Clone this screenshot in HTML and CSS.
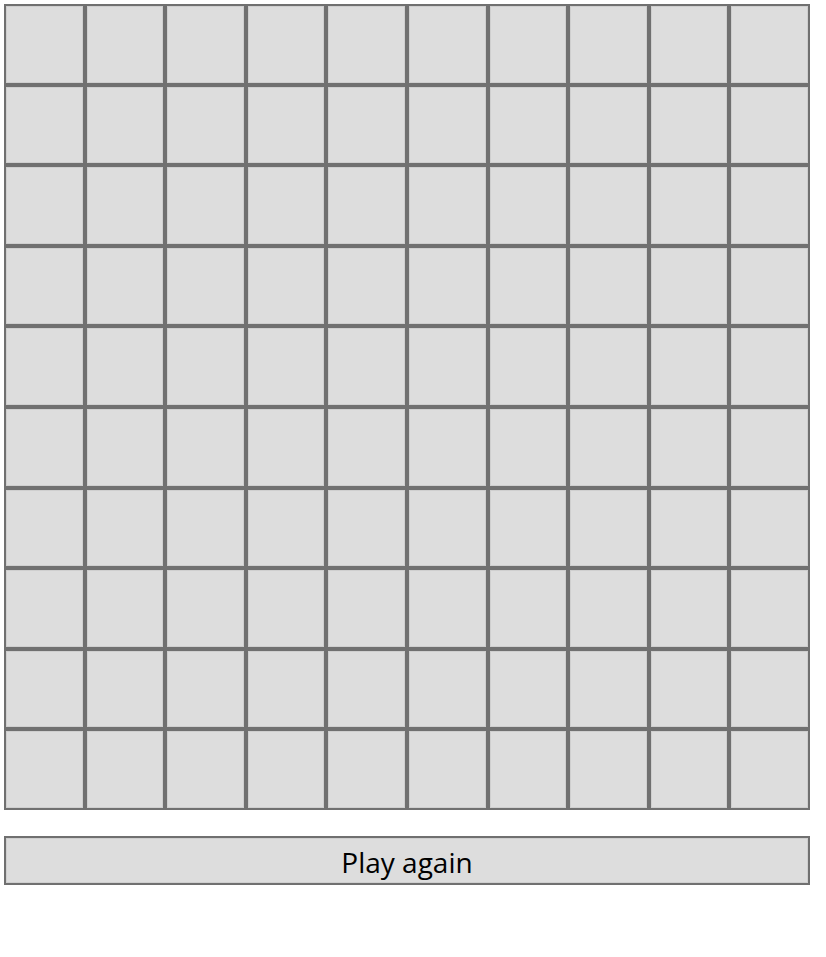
FILE: index.html
```html
<!DOCTYPE html>
<html lang="en">
<head>
<meta charset="utf-8">
<title>Grid</title>
<link rel="stylesheet" href="styles.css">
</head>
<body>
<div class="game">
  <div class="board">
    <button class="cell"></button><button class="cell"></button><button class="cell"></button><button class="cell"></button><button class="cell"></button><button class="cell"></button><button class="cell"></button><button class="cell"></button><button class="cell"></button><button class="cell"></button>
    <button class="cell"></button><button class="cell"></button><button class="cell"></button><button class="cell"></button><button class="cell"></button><button class="cell"></button><button class="cell"></button><button class="cell"></button><button class="cell"></button><button class="cell"></button>
    <button class="cell"></button><button class="cell"></button><button class="cell"></button><button class="cell"></button><button class="cell"></button><button class="cell"></button><button class="cell"></button><button class="cell"></button><button class="cell"></button><button class="cell"></button>
    <button class="cell"></button><button class="cell"></button><button class="cell"></button><button class="cell"></button><button class="cell"></button><button class="cell"></button><button class="cell"></button><button class="cell"></button><button class="cell"></button><button class="cell"></button>
    <button class="cell"></button><button class="cell"></button><button class="cell"></button><button class="cell"></button><button class="cell"></button><button class="cell"></button><button class="cell"></button><button class="cell"></button><button class="cell"></button><button class="cell"></button>
    <button class="cell"></button><button class="cell"></button><button class="cell"></button><button class="cell"></button><button class="cell"></button><button class="cell"></button><button class="cell"></button><button class="cell"></button><button class="cell"></button><button class="cell"></button>
    <button class="cell"></button><button class="cell"></button><button class="cell"></button><button class="cell"></button><button class="cell"></button><button class="cell"></button><button class="cell"></button><button class="cell"></button><button class="cell"></button><button class="cell"></button>
    <button class="cell"></button><button class="cell"></button><button class="cell"></button><button class="cell"></button><button class="cell"></button><button class="cell"></button><button class="cell"></button><button class="cell"></button><button class="cell"></button><button class="cell"></button>
    <button class="cell"></button><button class="cell"></button><button class="cell"></button><button class="cell"></button><button class="cell"></button><button class="cell"></button><button class="cell"></button><button class="cell"></button><button class="cell"></button><button class="cell"></button>
    <button class="cell"></button><button class="cell"></button><button class="cell"></button><button class="cell"></button><button class="cell"></button><button class="cell"></button><button class="cell"></button><button class="cell"></button><button class="cell"></button><button class="cell"></button>
  </div>
  <button class="again">Play again</button>
</div>
</body>
</html>
```

FILE: styles.css
```css
html, body {
  margin: 0;
  padding: 0;
  background: #ffffff;
}

body {
  padding: 4px;
  font-family: "Open Sans", "Noto Sans", sans-serif;
}

.game {
  width: 806px;
  display: flex;
  flex-direction: column;
  gap: 26px;
}

.board {
  display: grid;
  grid-template-columns: repeat(10, 1fr);
  grid-auto-rows: 80.6px;
}

.cell {
  margin: 0;
  padding: 0;
  background: #dddddd;
  border: 2px solid #707070;
  box-shadow: inset 0 0 0 1px #cfcfcf;
  border-radius: 0;
}

.again {
  margin: 0;
  height: 49px;
  width: 100%;
  background: #dddddd;
  border: 2px solid #707070;
  box-shadow: inset 0 0 0 1px #cfcfcf;
  border-radius: 0;
  font-family: "Open Sans", "Noto Sans", sans-serif;
  font-size: 28px;
  line-height: 1;
  color: #000000;
  padding: 3px 0 0;
}
```
